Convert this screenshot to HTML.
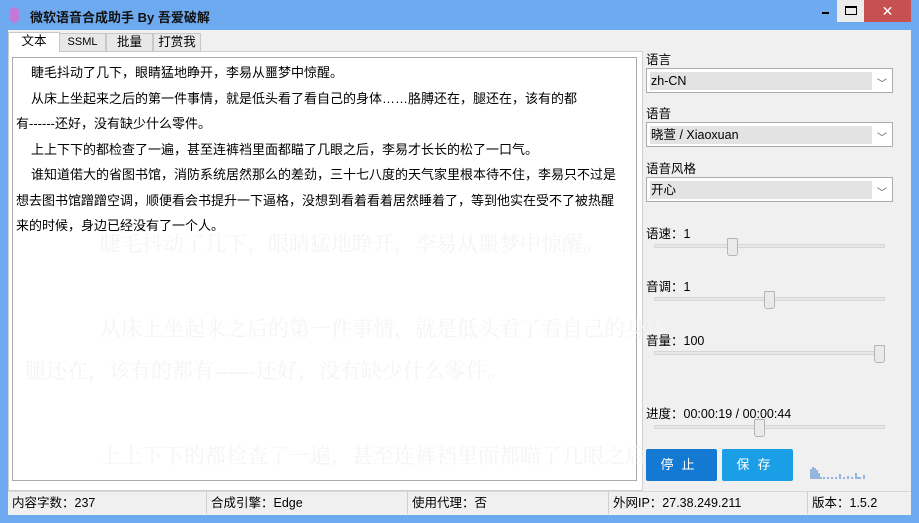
<!DOCTYPE html>
<html><head><meta charset="utf-8"><style>
*{margin:0;padding:0;box-sizing:border-box}
body{width:919px;height:523px;background:#6eaaf0;font-family:"Liberation Sans","Noto Sans CJK SC",sans-serif;font-size:12px;color:#000;position:relative;overflow:hidden}
.abs{position:absolute}
.client{left:8px;top:30px;width:903px;height:485px;background:#f0f0f0}
.title{left:30px;top:7px;font-size:13px;font-weight:bold;color:#111}
.tab{top:33px;height:19px;border:1px solid #c8c8c8;background:#e8e8e8;text-align:center;line-height:17px;font-size:12.5px}
.panel{left:8px;top:51px;width:635px;height:440px;background:#fff;border:1px solid #d0d0d0}
.tb{left:12px;top:57px;width:625px;height:424px;border:1px solid #aaa;background:#fff;padding:2px 3px;font-size:13px;line-height:25.5px;white-space:nowrap}
.tb b{display:inline-block;width:15px}
.lbl{left:646px;font-size:12.5px}
.sel{left:646px;width:247px;height:25px;border:1px solid #acacac;background:#fff}
.sel span{position:absolute;left:3px;top:3px;width:222px;height:18px;background:#e3e3e3;line-height:18px;padding-left:1px;font-size:12.5px}
.sel i{position:absolute;right:5px;top:6px;font-style:normal;font-size:10px;color:#555}
.trk{left:654px;width:231px;height:4px;background:#e7e7e7;border:1px solid #d6d6d6}
.th{width:11px;height:18px;background:#eaeaea;border:1px solid #b5b5b5;border-radius:1px 1px 3px 3px}
.btn{top:449px;width:71px;height:32px;color:#fff;text-align:center;line-height:32px;font-size:13px;letter-spacing:8px;border-radius:2px}
.sb{top:492px;height:22px;line-height:22px;font-size:12.5px;border-left:1px solid #d0d0d0;padding-left:4px}
.ghost{color:#f4f4f4;font-family:"Liberation Serif","Noto Serif CJK SC",serif;font-size:21px}
</style></head><body>
<div class="abs client"></div>
<div class="abs" style="left:10px;top:7px;width:9px;height:16px;background:#c17ad8;border-radius:5px"></div>
<div class="abs title">微软语音合成助手 By 吾爱破解</div>
<div class="abs" style="left:822px;top:12px;width:7px;height:2px;background:#000"></div>
<div class="abs" style="left:837px;top:0;width:27px;height:22px;background:#ececec"></div>
<div class="abs" style="left:845px;top:6px;width:12px;height:9px;border:1px solid #000;border-top-width:2px"></div>
<div class="abs" style="left:864px;top:0;width:47px;height:22px;background:#c75050;color:#fff;text-align:center;font-size:14px;line-height:22px">✕</div>
<div class="abs panel"></div>
<div class="abs tab" style="left:8px;top:32px;width:52px;height:20px;background:#fff;border-bottom:none">文本</div>
<div class="abs tab" style="left:59px;width:47px;font-size:11px">SSML</div>
<div class="abs tab" style="left:106px;width:47px">批量</div>
<div class="abs tab" style="left:153px;width:48px">打赏我</div>
<div class="abs tb"><b></b>睫毛抖动了几下，眼睛猛地睁开，李易从噩梦中惊醒。<br><b></b>从床上坐起来之后的第一件事情，就是低头看了看自己的身体……胳膊还在，腿还在，该有的都<br>有------还好，没有缺少什么零件。<br><b></b>上上下下的都检查了一遍，甚至连裤裆里面都瞄了几眼之后，李易才长长的松了一口气。<br><b></b>谁知道偌大的省图书馆，消防系统居然那么的差劲，三十七八度的天气家里根本待不住，李易只不过是<br>想去图书馆蹭蹭空调，顺便看会书提升一下逼格，没想到看着看着居然睡着了，等到他实在受不了被热醒<br>来的时候，身边已经没有了一个人。</div>
<div class="abs ghost" style="left:100px;top:228px">睫毛抖动了几下，眼睛猛地睁开，李易从噩梦中惊醒。</div>
<div class="abs ghost" style="left:100px;top:313px">从床上坐起来之后的第一件事情，就是低头看了看自己的身体</div>
<div class="abs ghost" style="left:25px;top:355px">腿还在，该有的都有------还好，没有缺少什么零件。</div>
<div class="abs ghost" style="left:100px;top:440px">上上下下的都检查了一遍，甚至连裤裆里面都瞄了几眼之后</div>
<div class="abs lbl" style="top:49px">语言</div>
<div class="abs sel" style="top:68px"><span>zh-CN</span><i>﹀</i></div>
<div class="abs lbl" style="top:103px">语音</div>
<div class="abs sel" style="top:122px"><span>晓萱 / Xiaoxuan</span><i>﹀</i></div>
<div class="abs lbl" style="top:158px">语音风格</div>
<div class="abs sel" style="top:177px"><span>开心</span><i>﹀</i></div>
<div class="abs lbl" style="top:223px">语速：1</div>
<div class="abs trk" style="top:244px"></div><div class="abs th" style="left:727px;top:238px"></div>
<div class="abs lbl" style="top:276px">音调：1</div>
<div class="abs trk" style="top:297px"></div><div class="abs th" style="left:764px;top:291px"></div>
<div class="abs lbl" style="top:330px">音量：100</div>
<div class="abs trk" style="top:351px"></div><div class="abs th" style="left:874px;top:345px"></div>
<div class="abs lbl" style="top:403px">进度：00:00:19 / 00:00:44</div>
<div class="abs trk" style="top:425px"></div><div class="abs th" style="left:754px;top:419px"></div>
<div class="abs btn" style="left:646px;background:#1479d2">停止</div>
<div class="abs btn" style="left:722px;background:#1a9ee6">保存</div>
<svg class="abs" style="left:810px;top:465px" width="55" height="14"><g stroke="#3a7bc8" stroke-width="1">
<path d="M1 14V4M3 14V2M5 14V3M7 14V5M9 14V8M11 14V12M14 14V12M18 14V12M22 14V12M26 14V12M30 14V9M34 14V12M38 14V11M42 14V12M46 14V8M50 14V12M54 14V10M48 14V12"/></g></svg>
<div class="abs" style="left:8px;top:491px;width:903px;height:1px;background:#d8d8d8"></div>
<div class="abs sb" style="left:8px;border:none">内容字数：237</div>
<div class="abs sb" style="left:206px">合成引擎：Edge</div>
<div class="abs sb" style="left:407px">使用代理：否</div>
<div class="abs sb" style="left:608px">外网IP：27.38.249.211</div>
<div class="abs sb" style="left:807px">版本：1.5.2</div>
</body></html>
